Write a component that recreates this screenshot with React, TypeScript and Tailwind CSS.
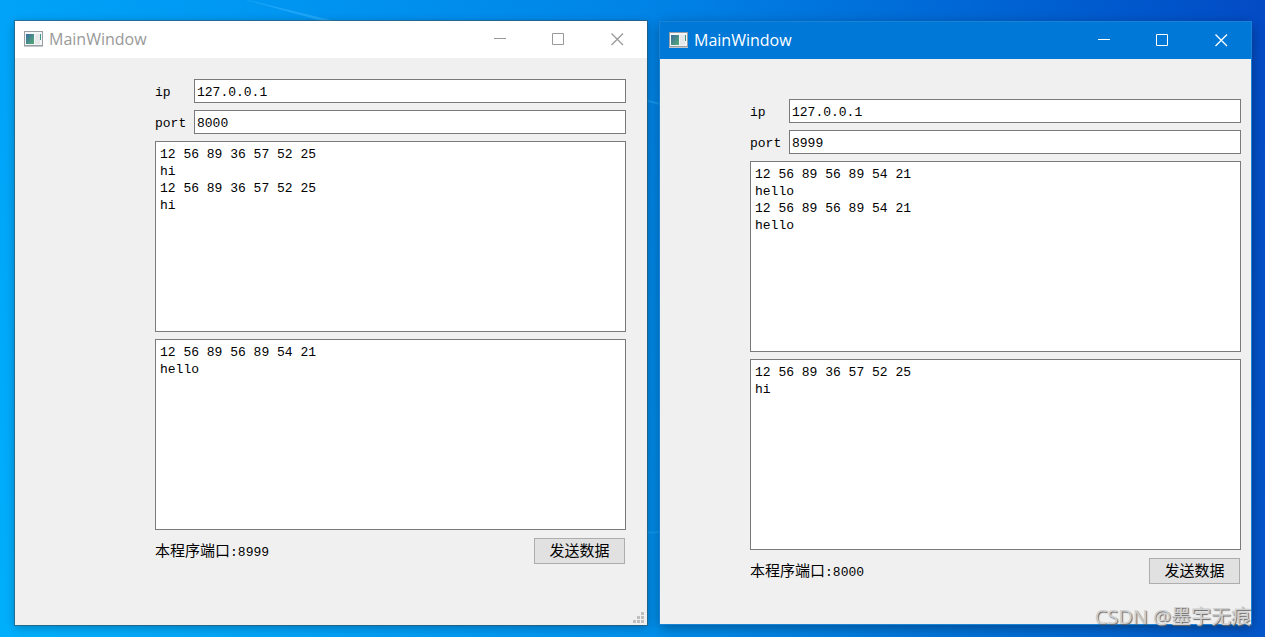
import { useId } from "react";
import clsx from "clsx";

// MainWindowProps holds the data and the window state of one client
interface MainWindowProps {
  active?: boolean;
  ip: string;
  port: string;
  received: string;
  message: string;
  ownPort: string;
}

// Small application icon in the title bar
const AppIcon: React.FC = () => (
  <svg width="19" height="16" viewBox="0 0 19 16" aria-hidden="true">
    <defs>
      <linearGradient id="appIconFill" x1="0" y1="0" x2="1" y2="1">
        <stop offset="0" stopColor="#3a6ea0" />
        <stop offset="1" stopColor="#55ab74" />
      </linearGradient>
    </defs>
    <rect x="0.5" y="0.5" width="18" height="14" fill="#f4f5f6" stroke="#9a9fa6" />
    <rect x="0" y="15" width="19" height="1" fill="#c4c7ca" />
    <rect x="2" y="3" width="8" height="10" fill="url(#appIconFill)" />
    <rect x="11" y="3" width="5" height="10" fill="#e6e8ea" />
    <rect x="16" y="3" width="1" height="6" fill="#3f9a8a" />
  </svg>
);

// Dotted resize handle in the window corner
const SizeGrip: React.FC = () => (
  <svg width="11" height="11" viewBox="0 0 11 11" fill="#bfbfbf" aria-hidden="true">
    <rect x="8" y="0" width="3" height="3" />
    <rect x="4" y="4" width="3" height="3" />
    <rect x="8" y="4" width="3" height="3" />
    <rect x="0" y="8" width="3" height="3" />
    <rect x="4" y="8" width="3" height="3" />
    <rect x="8" y="8" width="3" height="3" />
  </svg>
);

const captionButtons = [
  { label: "Minimize", path: "M1 5.5H13", strokeWidth: 1 },
  { label: "Maximize", path: "M0.5 0.5H11.5V11.5H0.5Z", strokeWidth: 1 },
  { label: "Close", path: "M0.5 0.5L12 12M12 0.5L0.5 12", strokeWidth: 1.3 },
];

const TitleBar: React.FC<{ active?: boolean }> = ({ active }) => (
  <header
    className={clsx(
      "flex h-[37px] items-center pl-[9px]",
      active ? "bg-[#0078d7] text-white" : "bg-white text-[#999999]"
    )}
  >
    <div className="flex grow items-center gap-1.5 pb-0.5">
      <AppIcon />
      <h1 className="font-['Open_Sans','Noto_Sans',sans-serif] text-base leading-6">
        MainWindow
      </h1>
    </div>
    {captionButtons.map(({ label, path, strokeWidth }) => (
      <button
        key={label}
        type="button"
        aria-label={label}
        className="flex h-full w-[59px] items-center justify-center"
      >
        <svg
          width="13"
          height="13"
          viewBox="0 0 13 13"
          fill="none"
          stroke="currentColor"
          strokeWidth={strokeWidth}
        >
          <path d={path} />
        </svg>
      </button>
    ))}
  </header>
);

const inputStyle =
  "h-6 w-full min-w-0 border border-[#7a7a7a] bg-white px-0.5 pt-0.5 outline-none";
const textareaStyle =
  "h-[191px] w-full resize-none border border-[#7a7a7a] bg-white p-1 outline-none";

const MainWindow: React.FC<MainWindowProps> = ({
  active,
  ip,
  port,
  received,
  message,
  ownPort,
}) => {
  const id = useId();

  return (
    <section
      className={clsx(
        "flex min-w-0 flex-col bg-[#f0f0f0] text-black",
        active
          ? "my-px shadow-[0_0_0_1px_#1883d7,0_3px_12px_rgba(0,0,0,0.4)]"
          : "shadow-[0_0_0_1px_rgba(60,80,90,0.55),0_2px_9px_rgba(0,0,0,0.3)]"
      )}
    >
      <TitleBar active={active} />
      <form
        className={clsx(
          "flex flex-col gap-[7px] font-['Liberation_Mono','Noto_Sans_CJK_SC',monospace] text-[13px] leading-[17px]",
          active ? "pt-10 pr-2.5 pl-[90px]" : "pt-[21px] pr-[21px] pl-[140px]"
        )}
        onSubmit={(e) => e.preventDefault()}
      >
        <div className="flex items-center gap-[7px]">
          <label htmlFor={`${id}-ip`} className="w-8 shrink-0 pt-0.5">
            ip
          </label>
          <input id={`${id}-ip`} className={inputStyle} defaultValue={ip} />
        </div>
        <div className="flex items-center gap-[7px]">
          <label htmlFor={`${id}-port`} className="w-8 shrink-0 pt-0.5">
            port
          </label>
          <input id={`${id}-port`} className={inputStyle} defaultValue={port} />
        </div>
        <textarea
          aria-label="Received"
          readOnly
          className={textareaStyle}
          defaultValue={received}
        />
        <textarea
          aria-label="Message"
          className={textareaStyle}
          defaultValue={message}
        />
        <div className="flex items-center justify-between p-px pl-0">
          <p className="pt-0.5">
            <span className="text-[15px]">本程序端口</span>:{ownPort}
          </p>
          <button
            type="submit"
            className="h-[26px] w-[91px] border border-[#adadad] bg-[#e1e1e1] pt-0.5 text-[15px]"
          >
            发送数据
          </button>
        </div>
      </form>
      {!active && (
        <div className="mt-auto flex justify-end pr-[3px] pb-0.5">
          <SizeGrip />
        </div>
      )}
    </section>
  );
};

// Desktop with the two clients side by side
export default function App() {
  return (
    <main
      className="relative grid min-h-screen grid-cols-[632fr_591fr] gap-[13px] overflow-hidden
        bg-linear-to-r from-[#00acfc] via-[#0088e8] to-[#0444c0] pt-[21px] pr-[14px] pb-3 pl-[15px]"
    >
      <svg
        className="absolute inset-0 h-full w-full"
        viewBox="0 0 1265 637"
        preserveAspectRatio="none"
        aria-hidden="true"
      >
        <defs>
          <linearGradient id="glow" x1="0" y1="0" x2="0" y2="1">
            <stop offset="0" stopColor="#0070e0" stopOpacity="0.15" />
            <stop offset="1" stopColor="#00c0ff" stopOpacity="0.15" />
          </linearGradient>
        </defs>
        <rect width="1265" height="637" fill="url(#glow)" />
        <path d="M235 -3L335 21H322Z" fill="#38b6ff" opacity="0.5" />
        <path d="M640 99L664 105" stroke="#38b6ff" strokeWidth="2" opacity="0.4" />
        <path d="M640 533L664 532" stroke="#38b6ff" strokeWidth="2" opacity="0.3" />
      </svg>
      <div className="relative grid min-w-0">
        <MainWindow
          ip="127.0.0.1"
          port="8000"
          received={"12 56 89 36 57 52 25\nhi\n12 56 89 36 57 52 25\nhi"}
          message={"12 56 89 56 89 54 21\nhello"}
          ownPort="8999"
        />
      </div>
      <div className="relative grid min-w-0">
        <MainWindow
          active
          ip="127.0.0.1"
          port="8999"
          received={"12 56 89 56 89 54 21\nhello\n12 56 89 56 89 54 21\nhello"}
          message={"12 56 89 36 57 52 25\nhi"}
          ownPort="8000"
        />
      </div>
      <p
        className="absolute right-[14px] bottom-2 font-['Open_Sans','Noto_Sans_CJK_SC',sans-serif]
          text-[20px] leading-6 text-[#d0d0d0] [text-shadow:1px_1px_1px_#666]"
      >
        CSDN @墨宇无痕
      </p>
    </main>
  );
}
